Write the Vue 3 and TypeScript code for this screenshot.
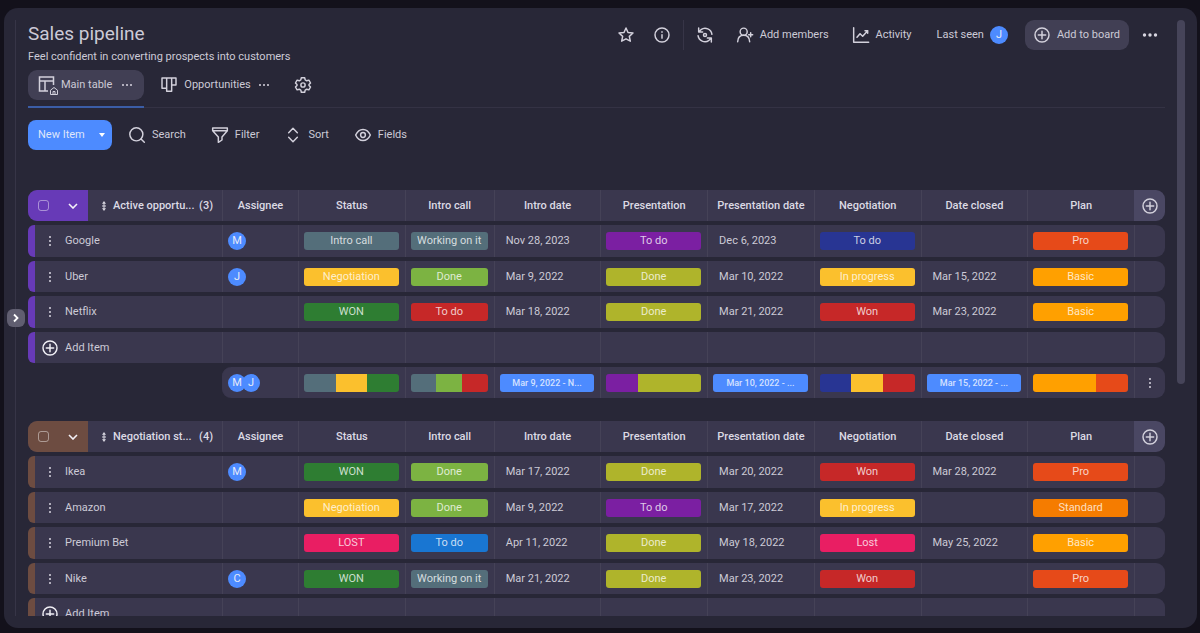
<script setup lang="ts">
import { ref } from 'vue'

type Tone =
  | 'slate' | 'yellow' | 'green' | 'lime' | 'red' | 'olive' | 'purple'
  | 'indigo' | 'blue' | 'pink' | 'flame' | 'orange' | 'amber'

interface Tag { label: string; tone: Tone }
interface Item {
  name: string
  assignee: string
  status: Tag
  intro: Tag
  introDate: string
  presentation: Tag
  presentationDate: string
  negotiation: Tag
  closed: string
  plan: Tag
}
interface Share { tone: Tone; weight: number }
interface Summary {
  people: string[]
  cells: { bar?: Share[]; range?: string }[]
}
interface Group {
  id: string
  title: string
  accent: string
  items: Item[]
  summary?: Summary
}

const tag = (label: string, tone: Tone): Tag => ({ label, tone })
const basic = tag('Basic', 'amber')
const pro = tag('Pro', 'flame')
const done = tag('Done', 'lime')
const shown = tag('Done', 'olive')
const won = tag('WON', 'green')
const dealWon = tag('Won', 'red')

const columns = [
  'Status', 'Intro call', 'Intro date', 'Presentation',
  'Presentation date', 'Negotiation', 'Date closed', 'Plan',
]

const groups: Group[] = [
  {
    id: 'active',
    title: 'Active opportu...',
    accent: 'violet',
    items: [
      { name: 'Google', assignee: 'M', status: tag('Intro call', 'slate'), intro: tag('Working on it', 'slate'), introDate: 'Nov 28, 2023', presentation: tag('To do', 'purple'), presentationDate: 'Dec 6, 2023', negotiation: tag('To do', 'indigo'), closed: '', plan: pro },
      { name: 'Uber', assignee: 'J', status: tag('Negotiation', 'yellow'), intro: done, introDate: 'Mar 9, 2022', presentation: shown, presentationDate: 'Mar 10, 2022', negotiation: tag('In progress', 'yellow'), closed: 'Mar 15, 2022', plan: basic },
      { name: 'Netflix', assignee: '', status: won, intro: tag('To do', 'red'), introDate: 'Mar 18, 2022', presentation: shown, presentationDate: 'Mar 21, 2022', negotiation: dealWon, closed: 'Mar 23, 2022', plan: basic },
    ],
    summary: {
      people: ['M', 'J'],
      cells: [
        { bar: [{ tone: 'slate', weight: 1 }, { tone: 'yellow', weight: 1 }, { tone: 'green', weight: 1 }] },
        { bar: [{ tone: 'slate', weight: 1 }, { tone: 'lime', weight: 1 }, { tone: 'red', weight: 1 }] },
        { range: 'Mar 9, 2022 - N...' },
        { bar: [{ tone: 'purple', weight: 1 }, { tone: 'olive', weight: 2 }] },
        { range: 'Mar 10, 2022 - ...' },
        { bar: [{ tone: 'indigo', weight: 1 }, { tone: 'yellow', weight: 1 }, { tone: 'red', weight: 1 }] },
        { range: 'Mar 15, 2022 - ...' },
        { bar: [{ tone: 'amber', weight: 2 }, { tone: 'flame', weight: 1 }] },
      ],
    },
  },
  {
    id: 'negotiation',
    title: 'Negotiation st...',
    accent: 'brown',
    items: [
      { name: 'Ikea', assignee: 'M', status: won, intro: done, introDate: 'Mar 17, 2022', presentation: shown, presentationDate: 'Mar 20, 2022', negotiation: dealWon, closed: 'Mar 28, 2022', plan: pro },
      { name: 'Amazon', assignee: '', status: tag('Negotiation', 'yellow'), intro: done, introDate: 'Mar 9, 2022', presentation: tag('To do', 'purple'), presentationDate: 'Mar 17, 2022', negotiation: tag('In progress', 'yellow'), closed: '', plan: tag('Standard', 'orange') },
      { name: 'Premium Bet', assignee: '', status: tag('LOST', 'pink'), intro: tag('To do', 'blue'), introDate: 'Apr 11, 2022', presentation: shown, presentationDate: 'May 18, 2022', negotiation: tag('Lost', 'pink'), closed: 'May 25, 2022', plan: basic },
      { name: 'Nike', assignee: 'C', status: won, intro: tag('Working on it', 'slate'), introDate: 'Mar 21, 2022', presentation: shown, presentationDate: 'Mar 23, 2022', negotiation: dealWon, closed: '', plan: pro },
    ],
  },
]

const selected = ref<string[]>([])
</script>

<template>
  <div class="page">
    <div class="panel">
      <main class="board">
        <button class="expand" type="button" aria-label="Expand sidebar">
          <svg viewBox="0 0 18 18"><path d="M7 5.500 10.500 9 7 12.500" /></svg>
        </button>

        <header class="top">
          <div class="heading">
            <h1>Sales pipeline</h1>
            <p>Feel confident in converting prospects into customers</p>
          </div>
          <div class="actions">
            <button class="plain star" type="button" aria-label="Favorite">
              <svg class="icon" viewBox="0 0 24 24"><path d="m12 1.500 3 6.700 7.500.8-5.500 5 1.500 7.300L12 17.700l-6.500 3.600L7 14 1.500 9l7.500-.8z" /></svg>
            </button>
            <button class="plain info" type="button" aria-label="Board info">
              <svg class="icon" viewBox="0 0 24 24"><circle cx="12" cy="12" r="10.500" /><path d="M12 11.500v5.200M12 7v.8" /></svg>
            </button>
            <span class="separator"></span>
            <button class="plain sync" type="button" aria-label="Integrations">
              <svg class="icon" viewBox="0 0 24 24">
                <path d="M2.500 1.500v6h6M3 7l3-3A10.400 10.400 0 0 1 22.400 11M21.500 22.500v-6h-6M21 17l-3 3A10.400 10.400 0 0 1 1.600 13" />
                <circle cx="12" cy="12" r="2.300" />
              </svg>
            </button>
            <button class="plain members" type="button">
              <svg class="icon" viewBox="0 0 24 24"><circle cx="10" cy="7" r="5.300" /><path d="M1 22c.3-5.800 3.500-9.500 9-9.500s8.700 3.700 9 9.500M20.500 8.500v6M17.500 11.500h6" /></svg>
              Add members
            </button>
            <button class="plain activity" type="button">
              <svg class="icon" viewBox="0 0 24 24"><path d="M1 1v22h22.500M6 15.500l4.500-5.500 4 4L22 5.500M18 5.500h4v4" /></svg>
              Activity
            </button>
            <span class="seen">Last seen <span class="avatar">J</span></span>
            <button class="add-board" type="button">
              <svg class="icon" viewBox="0 0 24 24"><circle cx="12" cy="12" r="10.500" /><path d="M12 6.500v11M6.500 12h11" /></svg>
              Add to board
            </button>
            <button class="plain more" type="button" aria-label="More">
              <svg class="dots-h" viewBox="0 0 16 16"><circle cx="2.500" cy="8" r="1.700" /><circle cx="8" cy="8" r="1.700" /><circle cx="13.500" cy="8" r="1.700" /></svg>
            </button>
          </div>
        </header>

        <nav class="tabs" aria-label="Views">
          <button class="tab active" type="button">
            <svg class="view-icon" viewBox="0 0 20 20">
              <path d="M10 16H1.500V2h14v8M1.500 6h14M7 6v10" />
              <path class="thin" d="M12.500 19.500v-4.300l3.500-2.700 3.500 2.700v4.300zM15 19v-2.500h2V19" />
            </svg>
            Main table
            <svg class="dots-s" viewBox="0 0 10 10"><circle cx="1" cy="5" r="1" /><circle cx="5" cy="5" r="1" /><circle cx="9" cy="5" r="1" /></svg>
          </button>
          <button class="tab" type="button">
            <svg class="icon" viewBox="0 0 24 24"><path d="M1.500 1.500h21V12H16V1.500M8.500 1.500V17h-7V1.500M8.500 17v4.500H16V12" /></svg>
            Opportunities
            <svg class="dots-s" viewBox="0 0 10 10"><circle cx="1" cy="5" r="1" /><circle cx="5" cy="5" r="1" /><circle cx="9" cy="5" r="1" /></svg>
          </button>
          <button class="plain gear" type="button" aria-label="View settings">
            <svg class="icon" viewBox="0 0 24 24">
              <path d="M9.500 1.200h5l.8 3.200 2.300 1.300 3.200-1 2.500 4.300L21 11.300v1.400l2.300 2.300-2.500 4.300-3.200-1-2.300 1.300-.8 3.200h-5l-.8-3.200-2.300-1.300-3.200 1L.7 15 3 12.700v-1.400L.7 9l2.500-4.300 3.200 1 2.300-1.300z" />
              <circle cx="12" cy="12" r="3.200" />
            </svg>
          </button>
        </nav>

        <div class="toolbar">
          <button class="new-item" type="button">
            New Item
            <svg class="caret" viewBox="0 0 6 4"><path d="M0 0h6L3 4z" /></svg>
          </button>
          <button class="plain tool" type="button">
            <svg class="icon" viewBox="0 0 24 24"><circle cx="11" cy="11" r="9.800" /><path d="m18 18 5 5" /></svg>
            Search
          </button>
          <button class="plain tool" type="button">
            <svg class="icon" viewBox="0 0 24 24"><path d="M1 1.500h22v4L15 15v4.500L9.500 23v-8L1 5.500zM1 5.500h22" /></svg>
            Filter
          </button>
          <button class="plain tool" type="button">
            <svg class="icon" viewBox="0 0 24 24"><path d="m5.500 8.500 6.500-6.500 6.500 6.500M5.500 15.500 12 22l6.500-6.500" /></svg>
            Sort
          </button>
          <button class="plain tool" type="button">
            <svg class="icon" viewBox="0 0 24 24"><path d="M1 12c2.500-5.600 6.200-8.400 11-8.400S20.500 6.400 23 12c-2.500 5.600-6.200 8.400-11 8.400S3.500 17.600 1 12z" /><circle cx="12" cy="12" r="3.600" /></svg>
            Fields
          </button>
        </div>

        <section class="groups">
          <table v-for="group in groups" :key="group.id" :class="group.accent">
            <colgroup>
              <col class="col-name" />
              <col class="col-person" />
              <col />
              <col class="col-call" />
              <col v-for="n in 6" :key="n" />
              <col class="col-end" />
            </colgroup>
            <thead>
              <tr>
                <th class="first" scope="col">
                  <div class="group-head">
                    <div class="group-tools">
                      <input v-model="selected" type="checkbox" :value="group.id" :aria-label="'Select ' + group.title" />
                      <button class="plain" type="button" aria-label="Collapse group">
                        <svg class="chevron" viewBox="0 0 10 6"><path d="m1 1 4 4 4-4" /></svg>
                      </button>
                    </div>
                    <svg class="drag" viewBox="0 0 6 12"><path d="M3 1l2 2.700H1zM3 11l2-2.700H1z" /><path d="M2.500 3h1v6h-1zM1 5.400h4v1.200H1z" /></svg>
                    <span class="group-title">{{ group.title }}</span>
                    <span class="count">({{ group.items.length }})</span>
                  </div>
                </th>
                <th scope="col">Assignee</th>
                <th v-for="column in columns" :key="column" scope="col">{{ column }}</th>
                <th class="end" scope="col">
                  <button class="plain" type="button" aria-label="Add column">
                    <svg class="icon" viewBox="0 0 24 24"><circle cx="12" cy="12" r="10.500" /><path d="M12 6.500v11M6.500 12h11" /></svg>
                  </button>
                </th>
              </tr>
            </thead>
            <tbody>
              <tr v-for="item in group.items" :key="item.name">
                <td class="first strip">
                  <div class="name">
                    <button class="plain lead" type="button" :aria-label="'Menu for ' + item.name">
                      <svg class="dots-v" viewBox="0 0 4 12"><circle cx="2" cy="2" r="1" /><circle cx="2" cy="6" r="1" /><circle cx="2" cy="10" r="1" /></svg>
                    </button>
                    {{ item.name }}
                  </div>
                </td>
                <td class="padded"><span v-if="item.assignee" class="avatar">{{ item.assignee }}</span></td>
                <td class="padded"><span class="pill" :class="item.status.tone">{{ item.status.label }}</span></td>
                <td class="padded"><span class="pill" :class="item.intro.tone">{{ item.intro.label }}</span></td>
                <td class="date">{{ item.introDate }}</td>
                <td class="padded"><span class="pill" :class="item.presentation.tone">{{ item.presentation.label }}</span></td>
                <td class="date">{{ item.presentationDate }}</td>
                <td class="padded"><span class="pill" :class="item.negotiation.tone">{{ item.negotiation.label }}</span></td>
                <td class="date">{{ item.closed }}</td>
                <td class="padded"><span class="pill" :class="item.plan.tone">{{ item.plan.label }}</span></td>
                <td class="end"></td>
              </tr>
              <tr>
                <td class="first strip">
                  <button class="plain name" type="button">
                    <span class="lead"><svg class="icon bright" viewBox="0 0 24 24"><circle cx="12" cy="12" r="10.500" /><path d="M12 6.500v11M6.500 12h11" /></svg></span>
                    Add Item
                  </button>
                </td>
                <td v-for="n in 9" :key="n"></td>
                <td class="end"></td>
              </tr>
              <tr v-if="group.summary" class="summary">
                <td class="blank"></td>
                <td class="padded start">
                  <div class="people"><span v-for="person in group.summary.people" :key="person" class="avatar">{{ person }}</span></div>
                </td>
                <td v-for="(cell, i) in group.summary.cells" :key="i" class="padded">
                  <span v-if="cell.range" class="pill range">{{ cell.range }}</span>
                  <div v-else class="bar">
                    <span v-for="share in cell.bar" :key="share.tone" :class="share.tone" :style="{ flexGrow: share.weight }"></span>
                  </div>
                </td>
                <td class="end">
                  <button class="plain" type="button" aria-label="Summary menu">
                    <svg class="dots-v" viewBox="0 0 4 12"><circle cx="2" cy="2" r="1" /><circle cx="2" cy="6" r="1" /><circle cx="2" cy="10" r="1" /></svg>
                  </button>
                </td>
              </tr>
            </tbody>
          </table>
        </section>
      </main>
      <div class="track"><div class="thumb"></div></div>
    </div>
  </div>
</template>

<style>
body {
  margin: 0;
  background: #13111b;
}
</style>

<style scoped>
* {
  box-sizing: border-box;
}
.page {
  height: 100vh;
  padding: 8px 3px 5px 4px;
  color: #cccad6;
  font: 11px/16px Roboto, "Liberation Sans", sans-serif;
}
.panel {
  display: flex;
  gap: 12px;
  height: 100%;
  padding: 12px 12px 12px 11px;
  border-radius: 14px;
  background: #282737;
}
.board {
  position: relative;
  display: flex;
  flex: 1;
  flex-direction: column;
  min-width: 0;
  padding-left: 12px;
  border-left: 1px solid #373547;
}
.track {
  width: 8px;
}
.thumb {
  height: 61%;
  border-radius: 4px;
  background: #464459;
}
button {
  display: flex;
  align-items: center;
  padding: 0;
  border: 0;
  color: inherit;
  font: inherit;
  cursor: pointer;
}
.plain {
  background: none;
}
svg {
  flex: none;
  display: block;
}
.icon {
  width: 16px;
  height: 16px;
  overflow: visible;
  fill: none;
  stroke: #d3d1dc;
  stroke-width: 2.2;
  stroke-linecap: round;
  stroke-linejoin: round;
}
.bright {
  stroke: #f0eff5;
}
.dots-h,
.dots-s,
.dots-v {
  fill: #d8d6e0;
}
.dots-h {
  width: 16px;
  height: 16px;
}
.dots-s {
  width: 10px;
  height: 10px;
}
.dots-v {
  width: 4px;
  height: 12px;
}
.expand {
  position: absolute;
  top: 289px;
  left: -9px;
  width: 18px;
  height: 18px;
  border-radius: 6px;
  background: #605e70;
}
.expand svg {
  width: 18px;
  fill: none;
  stroke: #fff;
  stroke-width: 1.8;
}

.top {
  display: flex;
  justify-content: space-between;
  align-items: flex-start;
}
h1 {
  margin: 0;
  font-size: 19px;
  font-weight: 400;
  line-height: 27px;
}
.heading p {
  margin: 0 0 3px;
  line-height: 20px;
}
.actions {
  display: flex;
  align-items: center;
  height: 29px;
}
.info {
  margin-left: 20px;
}
.separator {
  width: 1px;
  height: 30px;
  margin: 0 13px;
  background: #373547;
}
.members {
  gap: 7px;
  margin-left: 24px;
}
.activity {
  gap: 7px;
  margin-left: 24px;
}
.seen {
  display: flex;
  align-items: center;
  gap: 6px;
  margin: 0 17px 0 25px;
}
.add-board {
  gap: 7px;
  height: 30px;
  padding: 0 9px;
  border-radius: 9px;
  background: #413f54;
}
.more {
  margin: 0 7px 0 13px;
}
.avatar {
  flex: none;
  display: block;
  width: 18px;
  height: 18px;
  border-radius: 50%;
  background: #4d8bff;
  color: #e6eaf8;
  line-height: 18px;
  text-align: center;
}

.tabs {
  display: flex;
  align-items: flex-start;
  gap: 7px;
  height: 38px;
  border-bottom: 1px solid #343244;
}
.tab {
  position: relative;
  gap: 7px;
  height: 30px;
  padding: 0 12px 0 10px;
  border-radius: 9px;
  background: none;
}
.tab.active {
  gap: 10px;
  background: #413f54;
}
.tab.active .view-icon {
  margin-right: -7px;
}
.tab.active::after {
  content: "";
  position: absolute;
  right: 0;
  bottom: -8px;
  left: 0;
  height: 2px;
  background: #3b5da6;
}
.tab .dots-s {
  margin-left: 1px;
}
.tab.active .dots-s {
  margin-left: 0;
}
.view-icon {
  width: 20px;
  height: 20px;
  fill: none;
  stroke: #d3d1dc;
  stroke-width: 1.5;
}
.view-icon .thin {
  stroke-width: 1;
}
.gear {
  height: 30px;
  margin-left: 7px;
}

.toolbar {
  display: flex;
  gap: 26px;
  margin-top: 12px;
}
.new-item {
  justify-content: space-between;
  width: 84px;
  height: 30px;
  margin-right: -9px;
  padding: 0 7px 0 10px;
  border-radius: 8px;
  background: #4d8bff;
  color: #dfe6fa;
}
.caret {
  width: 6px;
  height: 4px;
  fill: #fff;
}
.tool {
  gap: 7px;
}

.groups {
  flex: 1;
  min-height: 0;
  margin-top: 36px;
  overflow: hidden;
}
table {
  width: 100%;
  table-layout: fixed;
  border-spacing: 0 4px;
}
table + table {
  margin-top: 15px;
}
.col-name {
  width: 194px;
}
.col-person {
  width: 76px;
}
.col-call {
  width: 89px;
}
.col-end {
  width: 31px;
}
th,
td {
  height: 31px;
  padding: 0;
  border-left: 1px solid #454257;
  background: #3a374e;
  text-align: left;
  white-space: nowrap;
}
tbody tr:nth-child(odd) td {
  height: 32px;
}
tbody tr.summary:nth-child(odd) td {
  height: 31px;
}
th {
  color: #dcdae4;
  font-weight: 500;
  text-align: center;
}
.first {
  border-left: 0;
  border-radius: 9px 0 0 9px;
  overflow: hidden;
}
.end {
  border-radius: 0 9px 9px 0;
}
th.end {
  background: #4a4763;
  border-left-color: #4a4763;
}
.end button {
  justify-content: center;
  width: 100%;
}
.violet {
  --accent: #673ab7;
}
.brown {
  --accent: #6d4c41;
}
.group-head {
  display: flex;
  align-items: center;
}
.group-tools {
  display: flex;
  align-items: center;
  justify-content: space-between;
  width: 60px;
  height: 31px;
  padding: 0 10px;
  background: var(--accent);
}
input[type="checkbox"] {
  appearance: none;
  width: 11px;
  height: 11px;
  margin: 0;
  border: 1px solid #ffffff70;
  border-radius: 3px;
}
input[type="checkbox"]:checked {
  background: #4d8bff;
}
.chevron {
  width: 10px;
  height: 6px;
  fill: none;
  stroke: #f4f2f8;
  stroke-width: 1.6;
}
.drag {
  width: 6px;
  height: 12px;
  margin: 0 6px 0 13px;
  fill: #d8d6e0;
}
.group-title {
  flex: 1;
  text-align: left;
}
.count {
  padding-right: 9px;
}
.strip {
  background: linear-gradient(to right, var(--accent) 7px, #3a374e 7px);
}
td.first {
  border-radius: 6px 0 0 6px;
}
.name {
  display: flex;
  align-items: center;
}
.lead {
  display: flex;
  justify-content: center;
  width: 16px;
  margin: 0 7px 0 14px;
}
.padded {
  padding: 0 6px 0 5px;
}
.date {
  padding-left: 11px;
}
.pill {
  display: block;
  height: 18px;
  border-radius: 3px;
  color: #ffffffc4;
  line-height: 18px;
  text-align: center;
}
.range {
  background: #4d8bff;
  font-size: 9px;
  font-weight: 500;
}
.bar {
  display: flex;
  height: 18px;
  border-radius: 3px;
  overflow: hidden;
}
.people {
  display: flex;
}
.people .avatar + .avatar {
  margin-left: -4px;
}
.blank {
  border: 0;
  background: none;
}
.start {
  border-color: #3a374e;
  border-radius: 9px 0 0 9px;
}
.slate { background: #546e7a; }
.yellow { background: #fbc02d; }
.green { background: #2e7d32; }
.lime { background: #7cb342; }
.red { background: #c62828; }
.olive { background: #afb42b; }
.purple { background: #7b1fa2; }
.indigo { background: #283593; }
.blue { background: #1976d2; }
.pink { background: #e91e63; }
.flame { background: #e64a19; }
.orange { background: #f57c00; }
.amber { background: #ffa000; }
</style>
